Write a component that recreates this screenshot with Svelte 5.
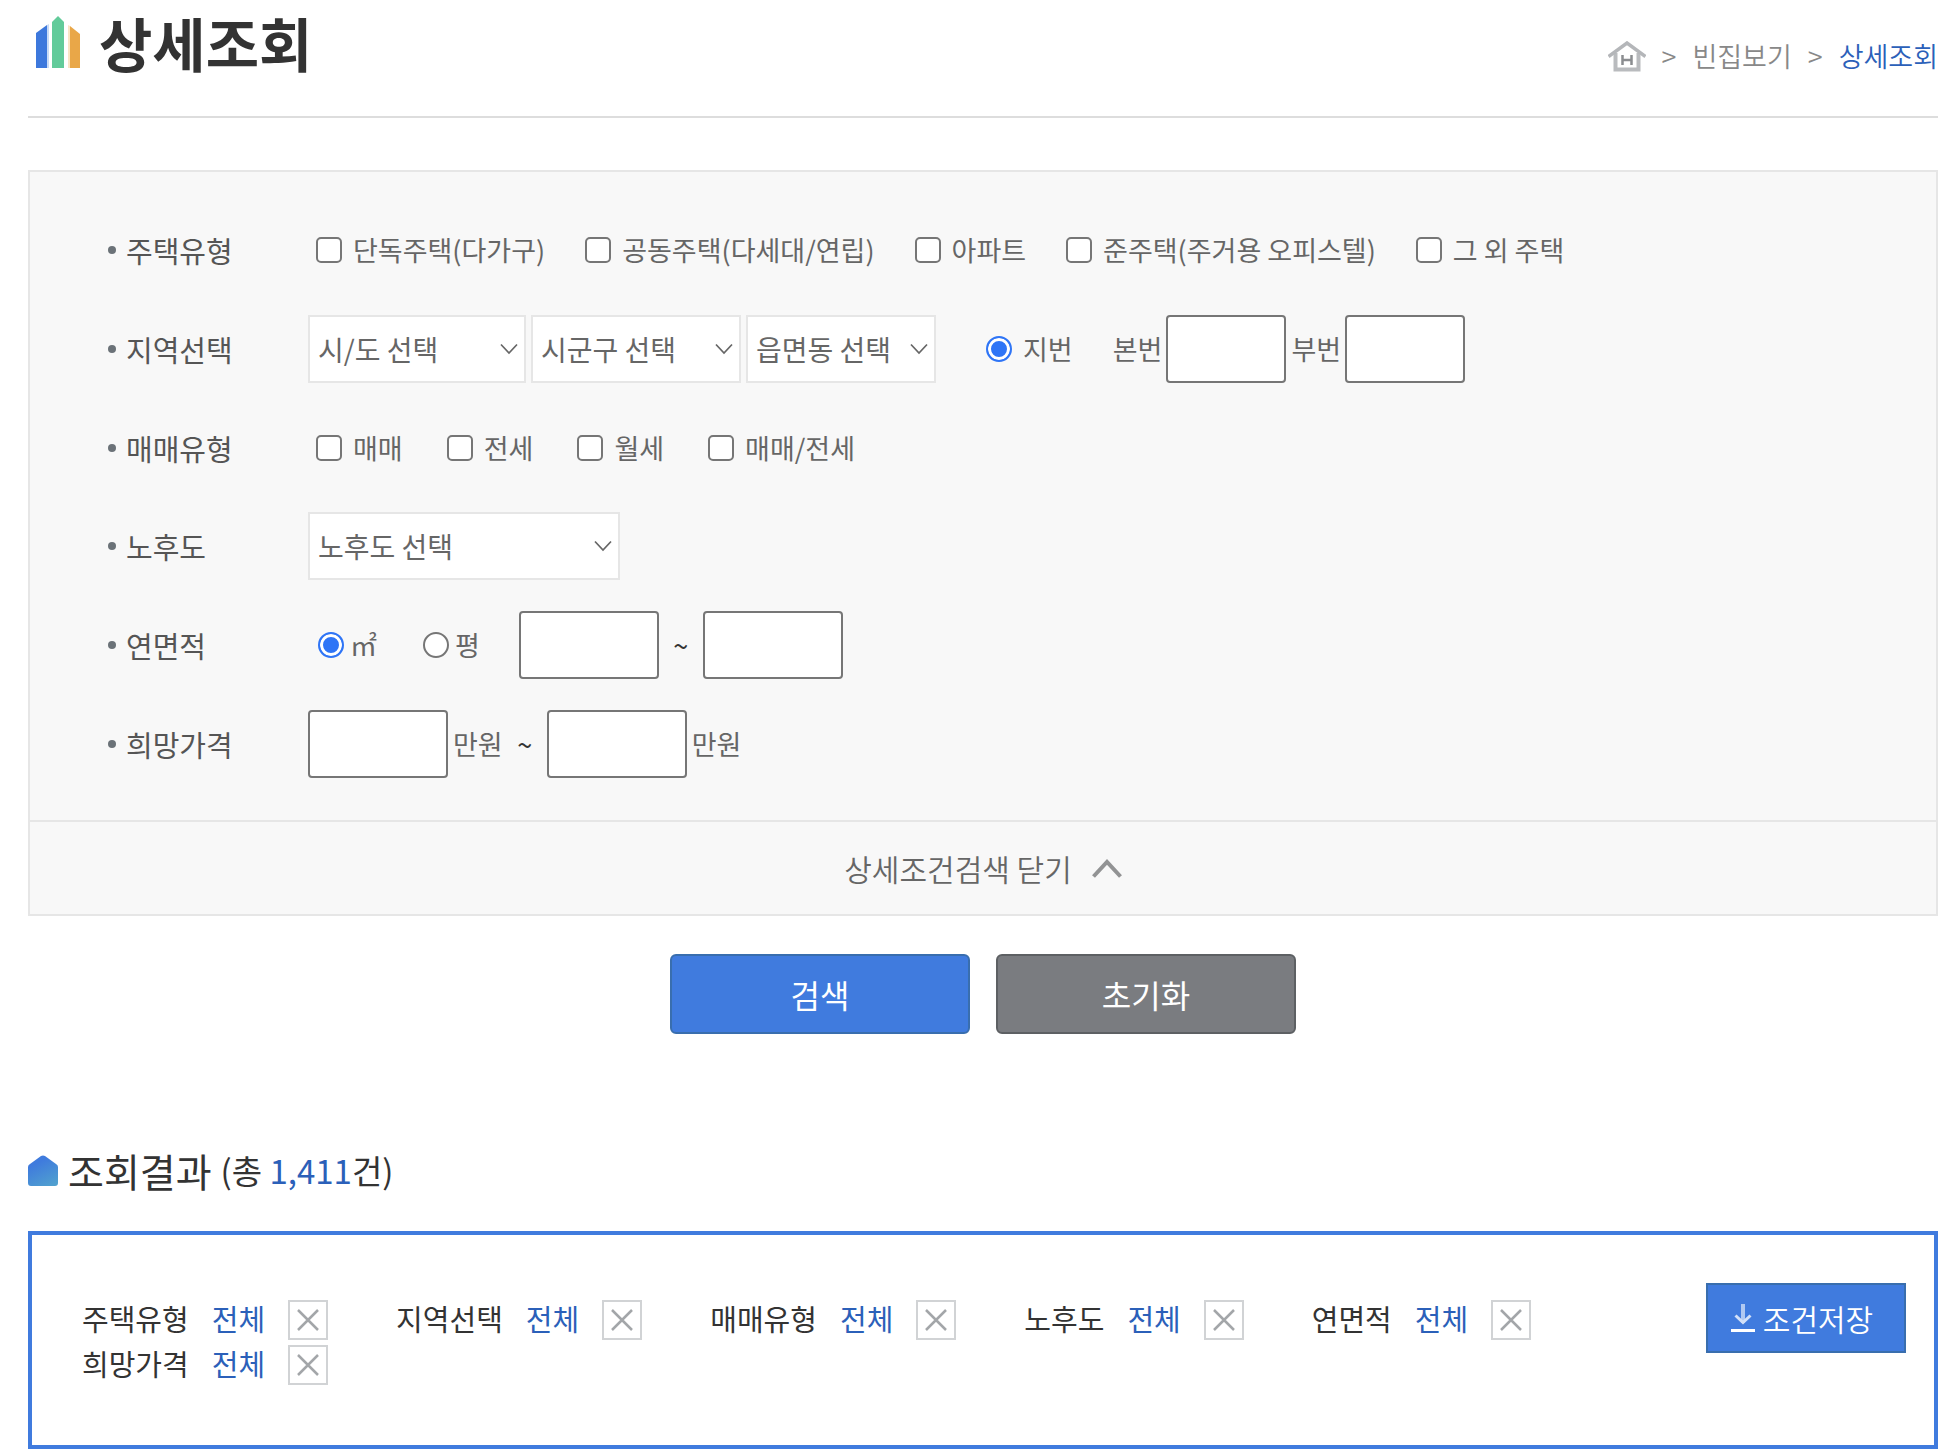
<script>
  const houseTypes = ['단독주택(다가구)', '공동주택(다세대/연립)', '아파트', '준주택(주거용 오피스텔)', '그 외 주택'];
  const dealTypes = ['매매', '전세', '월세', '매매/전세'];
  const regions = [
    { name: '시/도 선택', size: 'wide' },
    { name: '시군구 선택', size: 'middle' },
    { name: '읍면동 선택', size: 'narrow' }
  ];
  const conditions = ['주택유형', '지역선택', '매매유형', '노후도', '연면적', '희망가격'];
  let unit = $state('m2');
  let open = $state(true);
</script>

{#snippet picker(label, size)}
  <span class="picker {size}">
    <select aria-label={label}>
      <option>{label}</option>
    </select>
    <svg width="18" height="12" viewBox="0 0 18 12" aria-hidden="true">
      <path d="M1 1.5 9 10 17 1.5" fill="none" stroke="#666" stroke-width="1.7" />
    </svg>
  </span>
{/snippet}

<main>
  <header>
    <h1>
      <svg width="44" height="52" viewBox="0 0 44 52" aria-hidden="true">
        <path d="M0 17 11 9v43H0z" fill="#3d78dc" />
        <path d="M11 9l2-1v44h-2z" fill="#c9dbf6" />
        <path d="M16 6 22 0l6 6v46H16z" fill="#62cb9a" />
        <path d="M32 9l2 1v42h-2z" fill="#f9e5c6" />
        <path d="M34 10l10 8v34H34z" fill="#e9a748" />
      </svg>
      상세조회
    </h1>
    <nav aria-label="현재 위치">
      <a href="#home" aria-label="홈">
        <svg width="38" height="31" viewBox="0 0 38 31" aria-hidden="true">
          <path d="M7.500 12V28.500H30.500V12" fill="none" stroke="#b9bbbe" stroke-width="4" />
          <path d="M0.500 15.500 19 2 37.500 15.500" fill="none" stroke="#b4b6b9" stroke-width="3.500" />
          <path d="M14.500 14V24M23.500 14V24M14.500 19H23.500" fill="none" stroke="#8b8d90" stroke-width="2.500" />
        </svg>
      </a>
      <span>&gt;</span>
      <a href="#list">빈집보기</a>
      <span>&gt;</span>
      <a class="current" href="#detail" aria-current="page">상세조회</a>
    </nav>
  </header>

  <form id="search" onsubmit={(e) => e.preventDefault()}>
    <section class="panel">
      {#if open}
        <div class="fields">
          <div class="row">
            <h2>주택유형</h2>
            <div class="checks">
              {#each houseTypes as name}
                <label class="check"><input type="checkbox" /><span>{name}</span></label>
              {/each}
            </div>
          </div>
          <div class="row">
            <h2>지역선택</h2>
            <div class="pickers">
              {#each regions as r}
                {@render picker(r.name, r.size)}
              {/each}
            </div>
            <label class="radio lot"><input type="radio" name="lot" checked />지번</label>
            <label class="number">본번 <input class="box short" type="text" /></label>
            <label class="number">부번 <input class="box short" type="text" /></label>
          </div>
          <div class="row">
            <h2>매매유형</h2>
            <div class="checks deals">
              {#each dealTypes as name}
                <label class="check"><input type="checkbox" /><span>{name}</span></label>
              {/each}
            </div>
          </div>
          <div class="row">
            <h2>노후도</h2>
            {@render picker('노후도 선택', 'full')}
          </div>
          <div class="row">
            <h2>연면적</h2>
            <div class="units">
              <label class="radio"><input type="radio" name="unit" value="m2" bind:group={unit} />㎡</label>
              <label class="radio"><input type="radio" name="unit" value="py" bind:group={unit} />평</label>
            </div>
            <input class="box" type="text" aria-label="최소 연면적" />
            <span class="tilde">~</span>
            <input class="box" type="text" aria-label="최대 연면적" />
          </div>
          <div class="row">
            <h2>희망가격</h2>
            <label class="price"><input class="box" type="text" />만원</label>
            <span class="tilde">~</span>
            <label class="price"><input class="box" type="text" />만원</label>
          </div>
        </div>
      {/if}
      <button class="toggle" type="button" aria-expanded={open} onclick={() => (open = !open)}>
        상세조건검색 닫기
        <svg width="30" height="19" viewBox="0 0 30 19" aria-hidden="true">
          <path d="M1.500 17.500 15 3 28.500 17.500" fill="none" stroke="#929394" stroke-width="4" />
        </svg>
      </button>
    </section>
    <div class="actions">
      <button class="submit" type="submit">검색</button>
      <button class="reset" type="reset">초기화</button>
    </div>
  </form>

  <section class="results">
    <h2>
      <svg width="31" height="31" viewBox="0 0 31 31" aria-hidden="true">
        <defs>
          <linearGradient id="roof" x1="0.3" y1="0" x2="0.8" y2="1">
            <stop offset="0.2" stop-color="#3f7bdd" />
            <stop offset="1" stop-color="#50a0cf" />
          </linearGradient>
        </defs>
        <path d="M0 12Q0 10 2 9L13 1Q15 0 17 1L28 9Q30 10 30 12V28Q30 31 27 31H3Q0 31 0 28z" fill="url(#roof)" />
      </svg>
      조회결과 <small>(총 <b>1,411</b>건)</small>
    </h2>
    <div class="summary">
      <ul>
        {#each conditions as name}
          <li>
            <span>{name}</span>
            <em>전체</em>
            <button type="button" aria-label="{name} 조건 삭제">
              <svg width="22" height="22" viewBox="0 0 22 22" aria-hidden="true">
                <path d="M1 1 21 21M21 1 1 21" fill="none" stroke="#a3a6a9" stroke-width="2.500" />
              </svg>
            </button>
          </li>
        {/each}
      </ul>
      <button class="save" type="button">
        <svg width="24" height="28" viewBox="0 0 24 28" aria-hidden="true">
          <path d="M12 0V19" fill="none" stroke="#b0c9f2" stroke-width="4" />
          <path d="M4.500 11.500 12 18.500 19.500 11.500" fill="none" stroke="#d3e1f8" stroke-width="3" />
          <path d="M0 26.500H24" stroke="#fff" stroke-width="3" />
        </svg>
        조건저장
      </button>
    </div>
  </section>
</main>

<style>
  :global(body) {
    background: #fff;
  }
  main {
    padding: 0 8px 7px 28px;
    color: #666;
    font-family: 'Noto Sans CJK KR', 'Noto Sans', sans-serif;
    font-size: 27px;
    line-height: 40px;
  }
  main * {
    box-sizing: border-box;
  }
  h1, h2, ul, form {
    margin: 0;
    padding: 0;
  }
  button, select, input {
    margin: 0;
    font: inherit;
    color: inherit;
  }
  svg {
    display: block;
    flex: none;
  }
  header {
    display: flex;
    justify-content: space-between;
    min-height: 118px;
    border-bottom: 2px solid #ddd;
  }
  h1 {
    display: flex;
    align-items: center;
    gap: 19px;
    height: 84px;
    padding-left: 8px;
    color: #333;
    font-size: 58px;
    font-weight: 700;
  }
  nav {
    display: flex;
    align-items: center;
    gap: 16px;
    height: 112px;
    color: #888;
    font-weight: 350;
  }
  nav a {
    color: inherit;
    text-decoration: none;
  }
  nav .current {
    color: #2b60b9;
  }
  .panel {
    margin-top: 52px;
    background: #f8f8f8;
    border: 2px solid #e6e6e6;
  }
  .fields {
    display: grid;
    grid-template-rows: repeat(6, 1fr);
    min-height: 650px;
    padding: 29px 78px 27px;
    border-bottom: 2px solid #e6e6e6;
  }
  .row {
    display: flex;
    align-items: center;
  }
  .row h2 {
    display: flex;
    align-items: center;
    gap: 10px;
    width: 200px;
    color: #555;
    font-size: 29px;
    font-weight: 400;
  }
  .row h2::before {
    width: 8px;
    height: 8px;
    background: #6b7278;
    border-radius: 50%;
    content: '';
  }
  .checks {
    display: flex;
    gap: 40px;
    padding-left: 8px;
  }
  .deals {
    gap: 44px;
  }
  .check {
    display: flex;
    align-items: center;
    gap: 11px;
  }
  input[type='checkbox'],
  input[type='radio'] {
    flex: none;
    width: 26px;
    height: 26px;
    appearance: none;
    background: #fff;
    border: 2px solid #767676;
    border-radius: 5px;
  }
  input[type='checkbox']:checked {
    background: #2f75f6;
  }
  input[type='radio'] {
    border-radius: 50%;
  }
  input[type='radio']:checked {
    background: #2f75f6;
    border-color: #2f75f6;
    box-shadow: inset 0 0 0 3px #fff;
  }
  .pickers {
    display: flex;
    gap: 5px;
  }
  .picker {
    display: grid;
    align-items: center;
    font-size: 28px;
  }
  .picker > :global(*) {
    grid-area: 1 / 1;
  }
  .picker svg {
    margin-right: 8px;
    justify-self: end;
    pointer-events: none;
  }
  .picker select {
    width: 100%;
    height: 68px;
    padding: 0 8px;
    appearance: none;
    background: #fff;
    border: 2px solid #e6e6e6;
    border-radius: 0;
  }
  .wide { width: 218px; }
  .middle { width: 210px; }
  .narrow { width: 190px; }
  .full { width: 312px; }
  .radio {
    display: flex;
    align-items: center;
    gap: 6px;
  }
  .lot {
    gap: 11px;
    margin: 0 40px 0 50px;
  }
  .number {
    display: flex;
    align-items: center;
    gap: 4px;
    margin-right: 5px;
  }
  .box {
    width: 140px;
    height: 68px;
    padding: 0 8px;
    background: #fff;
    border: 2px solid #767676;
    border-radius: 4px;
  }
  .short {
    width: 120px;
  }
  .units {
    display: flex;
    gap: 46px;
    padding: 0 39px 0 10px;
  }
  .price {
    display: flex;
    align-items: center;
    gap: 5px;
  }
  .tilde {
    width: 44px;
    color: #333;
    text-align: center;
  }
  .toggle {
    display: flex;
    align-items: center;
    justify-content: center;
    gap: 20px;
    width: 100%;
    height: 92px;
    padding: 0;
    background: none;
    border: 0;
    font-size: 30px;
    font-weight: 350;
  }
  .actions {
    display: flex;
    justify-content: center;
    gap: 26px;
    margin-top: 38px;
  }
  .actions button {
    width: 300px;
    height: 80px;
    color: #fff;
    background: #407bde;
    border: 2px solid #396eae;
    border-radius: 6px;
    font-size: 32px;
  }
  .actions .reset {
    background: #7a7c80;
    border-color: #5d6063;
  }
  .results > h2 {
    display: flex;
    align-items: center;
    gap: 9px;
    height: 76px;
    margin: 98px 0 23px;
    color: #333;
    font-size: 39px;
    font-weight: 400;
  }
  small {
    font-size: 33px;
  }
  small b {
    color: #2b60b9;
    font-weight: 400;
  }
  .summary {
    display: flex;
    align-items: flex-start;
    justify-content: space-between;
    min-height: 218px;
    padding: 48px 28px 48px 50px;
    border: 4px solid #407bde;
  }
  ul {
    display: flex;
    flex: 1;
    flex-wrap: wrap;
    gap: 5px 68px;
    padding-top: 17px;
    list-style: none;
  }
  li {
    display: flex;
    align-items: flex-start;
    gap: 23px;
    color: #333;
    font-size: 29px;
    line-height: 36px;
  }
  li em {
    color: #2b60b9;
    font-style: normal;
  }
  li button {
    display: grid;
    place-items: center;
    width: 40px;
    height: 40px;
    padding: 0;
    background: #fff;
    border: 2px solid #d1d3d5;
  }
  .save {
    display: flex;
    flex: none;
    align-items: center;
    justify-content: center;
    gap: 8px;
    width: 200px;
    height: 70px;
    padding: 0 8px 0 0;
    color: #fff;
    background: #407bde;
    border: 2px solid #396eae;
    font-size: 30px;
    font-weight: 350;
  }
</style>
